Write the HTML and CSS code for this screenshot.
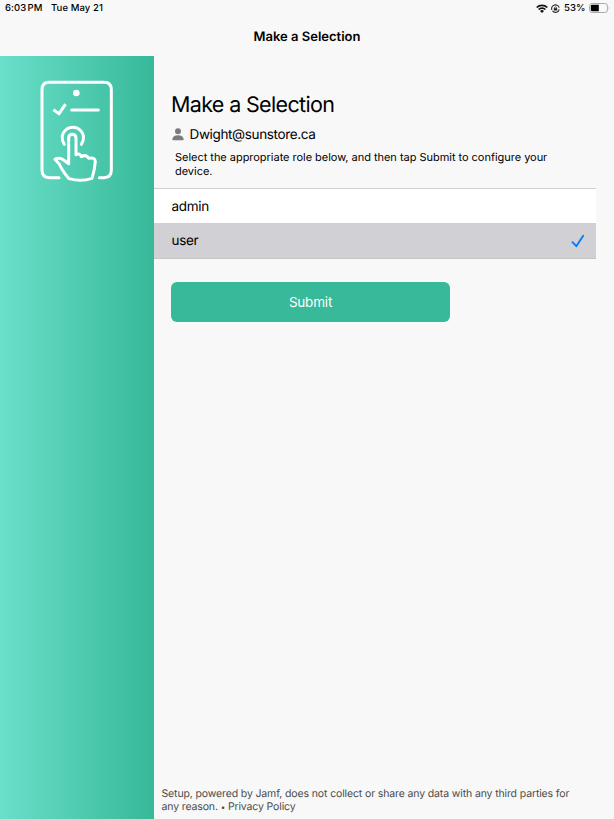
FILE: index.html
```html
<!DOCTYPE html>
<html lang="en">
<head>
<meta charset="utf-8">
<title>Make a Selection</title>
<link rel="stylesheet" href="styles.css">
</head>
<body>
<div class="status">
  <span class="time">6:03 PM</span><span class="date">Tue May 21</span>
  <div class="indicators">
    <svg width="12" height="9" viewBox="0 0 12 9" fill="none" stroke="#111" stroke-width="1.7"><path d="M.7 3.5a7.5 7.5 0 0 1 10.6 0M2.6 5.5a4.8 4.8 0 0 1 6.8 0"/><path d="M4 6.9a2.8 2.8 0 0 1 4 0L6 8.9z" fill="#111" stroke="none"/></svg>
    <svg class="lock" width="9" height="9" viewBox="0 0 9 9" fill="none" stroke="#222"><path d="M.8 5.800A3.800 3.800 0 0 1 8.200 3.700M8.200 5.300A3.800 3.800 0 0 1 1.500 6.900" stroke-width="1.100"/><path d="M3.500 4.500v-.7a1 1 0 0 1 2 0v.7" stroke-width=".7"/><path d="M2.800 4.200h3.400v2.300H2.800z" fill="#222" stroke="none"/></svg>
    <span class="percent">53%</span>
    <svg class="battery" width="21" height="10" viewBox="0 0 21 10"><rect x=".5" y=".5" width="18" height="9" rx="2.7" fill="none" stroke="#aaa"/><path d="M3 1.8h6.8v6.4H3A1.3 1.3 0 0 1 1.8 7V3A1.3 1.3 0 0 1 3 1.800z" fill="#000"/><path d="M19.700 3.500q1.300 1.500 0 3z" fill="#aaa"/></svg>
  </div>
</div>
<header class="nav">Make a Selection</header>
<div class="layout">
  <aside class="side">
    <svg width="95" height="120" viewBox="0 0 285 360" fill="none" stroke="#fff" stroke-width="9" stroke-linecap="round" stroke-linejoin="round">
      <path d="M87 323H58Q36 323 36 301V59Q36 37 58 37H222Q244 37 244 59V301Q244 323 222 323H208"/>
      <circle cx="139" cy="69" r="10" fill="#fff" stroke="none"/>
      <path d="M74 122l13 9 17-25" stroke-linecap="square" stroke-linejoin="miter"/>
      <path d="M125 120h80"/>
      <path d="M103 223A32 32 0 1 1 154 223"/>
      <path d="M116 281V205Q116 193 127 193T138 205V254Q149 248 154 260Q169 252 176 265Q195 260 196 275Q194 300 186 325Q154 336 117 326Q104 311 95 296Q89 280 75 268Q85 261 98 268L116 281"/>
    </svg>
  </aside>
  <main class="main">
    <h1 class="title">Make a Selection</h1>
    <div class="account">
      <svg width="12" height="13" viewBox="0 0 12 13" fill="#7b7b7b"><circle cx="6" cy="3.300" r="3"/><path d="M.3 11.200Q1 7.300 6 7.300T11.700 11.200Q11.700 12.200 10.700 12.200H1.300Q.3 12.200 .3 11.200z"/></svg>
      <span class="email">Dwight@sunstore.ca</span>
    </div>
    <p class="intro">Select the appropriate role below, and then tap Submit to configure your<br>device.</p>
    <ul class="roles">
      <li class="role"><span class="name">admin</span></li>
      <li class="role selected"><span class="name">user</span>
        <svg width="14" height="14" viewBox="0 0 14 14" fill="none" stroke="#087aff" stroke-width="1.900" stroke-linecap="round" stroke-linejoin="round"><path d="M1.500 8.200l3.800 4L12.200 1.800"/></svg>
      </li>
    </ul>
    <button class="submit">Submit</button>
    <footer class="foot">Setup, powered by Jamf, does not collect or share any data with any third parties for<br>any reason. <span class="dot">•</span> <span class="policy">Privacy Policy</span></footer>
  </main>
</div>
</body>
</html>
```
FILE: styles.css
```css
* { box-sizing: border-box; }
body {
  margin: 0;
  height: 819px;
  display: flex;
  flex-direction: column;
  background: #f8f8f8;
  color: #000;
  font-family: Inter, "Liberation Sans", sans-serif;
  text-rendering: geometricPrecision;
}
.status {
  height: 16px;
  padding: 0 4px 0 5px;
  display: flex;
  align-items: center;
  font-size: 9.5px;
  font-weight: 500;
  letter-spacing: .1px;
  white-space: nowrap;
}
.time { width: 46px; word-spacing: -1.5px; }
.indicators { margin-left: auto; display: flex; align-items: center; }
.lock { margin-left: 3px; }
.percent { margin-left: 4px; width: 25px; }
.nav {
  height: 40px;
  padding-top: 1px;
  text-align: center;
  font-size: 13px;
  font-weight: 600;
  line-height: 40px;
}
.layout { flex: 1; display: flex; }
.side {
  width: 153.5px;
  padding: 14px 0 0 30px;
  background: linear-gradient(90deg, #6adfca, #37b999);
}
.main { flex: 1; display: flex; flex-direction: column; align-items: flex-start; }
.title {
  margin: 35px 0 0 17.5px;
  font-size: 21.5px;
  font-weight: 400;
  line-height: 28px;
  letter-spacing: -.65px;
}
.account { margin: 5px 0 0 18.5px; height: 20px; display: flex; align-items: center; }
.email { margin-left: 5.5px; padding-top: 2px; font-size: 13.5px; letter-spacing: -.36px; }
.intro { margin: 6px 0 0 21.5px; font-size: 11px; line-height: 14px; letter-spacing: -.03px; }
.roles {
  margin: 10px 0 0;
  padding: 0;
  width: 442px;
  list-style: none;
  border-top: 1px solid #d0d0d2;
  border-bottom: 1px solid #c6c6c8;
}
.role {
  height: 34px;
  padding: 0 11px 0 18px;
  display: flex;
  align-items: center;
  justify-content: space-between;
  background: #fff;
  font-size: 13.5px;
  letter-spacing: -.3px;
}
.name { padding-top: 1px; }
.selected { height: 35px; background: #d1d0d5; }
.submit {
  margin: 23px 0 0 17.5px;
  width: 279px;
  height: 40px;
  padding: 0;
  border: 0;
  border-radius: 6px;
  background: #38b99a;
  color: #fff;
  font: 400 13.5px Inter, "Liberation Sans", sans-serif;
  letter-spacing: -.2px;
}
.foot {
  margin: auto 0 5px 8px;
  font-size: 10.5px;
  line-height: 13px;
  letter-spacing: -.13px;
  color: #4b4b4b;
}
.dot { font-size: 8px; }
```
